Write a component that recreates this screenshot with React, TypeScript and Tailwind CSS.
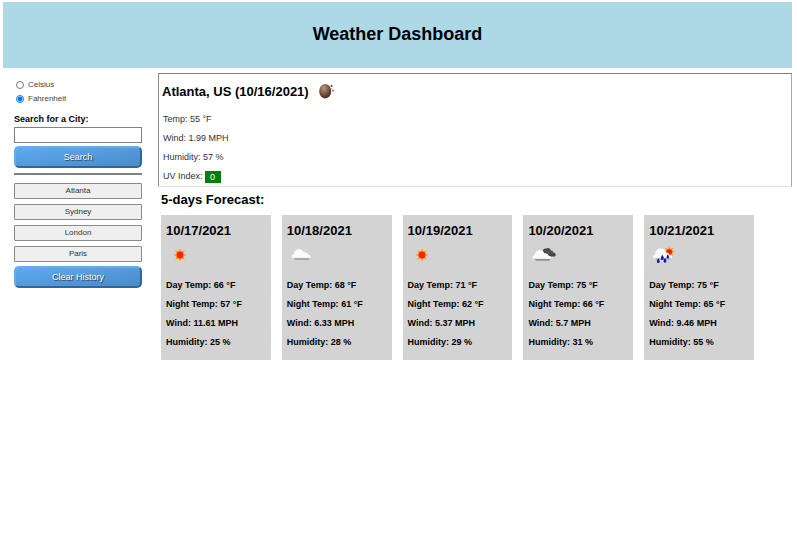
import { useState } from "react";

type Kind = "sun" | "cloud" | "broken" | "rain";

const days: { date: string; icon: Kind; day: number; night: number; wind: string; humidity: number }[] = [
  { date: "10/17/2021", icon: "sun", day: 66, night: 57, wind: "11.61", humidity: 25 },
  { date: "10/18/2021", icon: "cloud", day: 68, night: 61, wind: "6.33", humidity: 28 },
  { date: "10/19/2021", icon: "sun", day: 71, night: 62, wind: "5.37", humidity: 29 },
  { date: "10/20/2021", icon: "broken", day: 75, night: 66, wind: "5.7", humidity: 31 },
  { date: "10/21/2021", icon: "rain", day: 75, night: 65, wind: "9.46", humidity: 55 },
];

const cities = ["Atlanta", "Sydney", "London", "Paris"];

function Sun({ cx, cy, r }: { cx: number; cy: number; r: number }) {
  return (
    <g>
      {[0, 45, 90, 135, 180, 225, 270, 315].map((a) => (
        <path
          key={a}
          d={`M${cx - r * 0.5} ${cy - r * 0.7}L${cx} ${cy - r * 2}L${cx + r * 0.5} ${cy - r * 0.7}Z`}
          fill="#ff9a1c"
          transform={`rotate(${a} ${cx} ${cy})`}
        />
      ))}
      <circle cx={cx} cy={cy} r={r * 1.15} fill="#ffab2e" />
      <circle cx={cx} cy={cy} r={r} fill="#fa2208" />
    </g>
  );
}

function WeatherIcon({ kind }: { kind: Kind }) {
  return (
    <svg width="28" height="28" viewBox="0 0 28 28" aria-hidden="true">
      <defs>
        <linearGradient id={`cloud-${kind}`} x1="0" y1="0" x2="0" y2="1">
          <stop offset="0" stopColor="#ffffff" />
          <stop offset="0.8" stopColor="#fafafa" />
          <stop offset="1" stopColor="#e6e6e6" />
        </linearGradient>
      </defs>
      {kind === "sun" && <Sun cx={14} cy={14} r={3.4} />}
      {kind === "cloud" && (
        <g>
          <path d="M6.5 17H22.8L21.8 18.6H8Z" fill="#777" />
          <path d="M5.6 17.4C3.8 16.8 4.4 13.7 6.7 13.2C7.4 9.6 11.2 7.4 14.2 8.8C15.5 9.4 16.2 10.4 16.8 11.4C19 11 20.6 12.3 21 13.8C23.4 13.8 24.4 16.2 23.2 17.4Z" fill="url(#cloud-cloud)" />
        </g>
      )}
      {kind === "broken" && (
        <g>
          <path d="M14.6 12C14.2 9 16 7 18.4 7.6C20 6.2 22.6 7.4 23 9.4C24.4 9.2 25.4 10.4 25.2 11.6C27.8 11.6 28.6 14.4 26.8 15.6H20Z" fill="#464646" />
          <path d="M17 9.2L22 12.6M21 8.8L25 12.4" stroke="#707070" strokeWidth="0.7" />
          <path d="M6 17.8H22.6L21.6 19.4H8Z" fill="#707070" />
          <path d="M5.4 18.2C3.4 17.2 4.6 14.4 6.6 14C7.2 10.4 10.8 8.2 13.9 9.6C15.2 10.3 16 11.4 16.5 12.4C18.5 12.1 20.2 13.1 20.7 14.7C22.8 14.7 24 17 22.8 18.2Z" fill="url(#cloud-broken)" />
        </g>
      )}
      {kind === "rain" && (
        <g>
          <Sun cx={20.2} cy={10.8} r={2.9} />
          <path d="M5.6 18C3 17 4 13.8 6.1 13.4C6.3 9.6 9 7 12.6 7.6C15.1 7.9 16.3 9.7 16.8 11.5C18.9 11.2 20 12.4 20.4 14C23 13.8 24 17 22.2 18Z" fill="url(#cloud-rain)" />
          <path d="M6.6 18H22" stroke="#888" strokeWidth="0.8" />
          <path d="M9.4 17.2C10.9 19.3 11.3 21.8 9.4 22C7.3 22 7.5 19.5 9.4 17.2ZM13.4 13.8C15 16.1 15.5 18.8 13.4 19C11.1 19 11.7 16.1 13.4 13.8ZM16.1 16.8C17.5 18.9 18 21.6 16.1 21.8C14 21.8 14.3 18.9 16.1 16.8ZM18.9 13.2C20.2 15.2 20.7 17.4 18.9 17.6C17 17.6 17.3 15.2 18.9 13.2Z" fill="#18189c" />
        </g>
      )}
    </svg>
  );
}

function Moon() {
  return (
    <svg width="18" height="18" viewBox="0 0 18 18" className="shrink-0" aria-hidden="true">
      <defs>
        <radialGradient id="moon" cx="0.4" cy="0.3" r="0.75">
          <stop offset="0" stopColor="#b79a88" />
          <stop offset="0.5" stopColor="#80583f" />
          <stop offset="1" stopColor="#382011" />
        </radialGradient>
      </defs>
      <ellipse cx="7.2" cy="8.2" rx="6" ry="7.3" fill="url(#moon)" />
      <circle cx="13.6" cy="2.9" r="1.1" fill="#6d5647" />
      <circle cx="15" cy="7.6" r="1" fill="#85736a" />
      <circle cx="13.4" cy="5.6" r="0.6" fill="#a3958d" />
    </svg>
  );
}

const blueButton =
  "h-[22px] w-full rounded-[5px] border-2 border-t-[#62adf0] border-l-[#62adf0] border-r-[#356594] border-b-[#356594] bg-linear-to-br from-[#5cabf2] to-[#4a8bc8] text-[9px] leading-[16px] text-white [text-shadow:1px_1px_1px_#333]";

export default function App() {
  const [unit, setUnit] = useState("f");
  return (
    <div className="min-h-screen bg-white pt-[2px] pr-[5px] pl-[3px] font-['Liberation_Sans',Arial,sans-serif] text-black">
      <header className="flex h-[66px] items-center justify-center bg-[#add8e6] pb-0.5">
        <h1 className="text-[18px] leading-6 font-bold">Weather Dashboard</h1>
      </header>
      <div className="flex gap-4 pt-[5px] pl-[11px]">
        <aside className="w-32 shrink-0 pt-1">
          <div className="flex flex-col pt-px text-[8px] leading-[14px] text-[#444]">
            <label className="flex items-center gap-1 pl-0.5">
              <input type="radio" name="unit" className="size-2" checked={unit === "c"} onChange={() => setUnit("c")} />
              Celsius
            </label>
            <label className="flex items-center gap-1 pl-0.5">
              <input type="radio" name="unit" className="size-2" checked={unit === "f"} onChange={() => setUnit("f")} />
              Fahrenheit
            </label>
          </div>
          <label htmlFor="city" className="mt-[7px] block text-[9px] leading-[12px] font-bold">
            Search for a City:
          </label>
          <input id="city" type="text" className="mt-0.5 block h-4 w-full border border-[#808080] px-1 text-[8px]" />
          <button type="button" className={`mt-[3px] block ${blueButton}`}>Search</button>
          <hr className="mt-[5px] border-t-2 border-[#808080]" />
          <div className="mt-2 flex flex-col gap-[5px]">
            {cities.map((c) => (
              <button key={c} type="button" className="h-4 rounded-[1px] border border-[#8a8a8a] bg-[#efefef] text-[8px] leading-[14px] text-[#333]">
                {c}
              </button>
            ))}
          </div>
          <button type="button" className={`mt-[4px] block ${blueButton}`}>Clear History</button>
        </aside>
        <main className="min-w-0 flex-1">
          <section className="border border-t-[#808080] border-r-[#a8a8a8] border-b-[#e0e0e0] border-l-[#909090] pt-2 pl-[3px]">
            <h2 className="flex items-center gap-[9px] text-[13px] leading-5 font-bold">
              Atlanta, US (10/16/2021)
              <Moon />
            </h2>
            <div className="mt-2 pl-px text-[9px] leading-[19px] text-[#333]">
              <p>Temp: 55 °F</p>
              <p>Wind: 1.99 MPH</p>
              <p>Humidity: 57 %</p>
              <p className="flex items-center gap-0.5">
                UV Index:
                <span className="w-4 bg-[#008000] text-center leading-[12px] text-white">0</span>
              </p>
            </div>
          </section>
          <section className="pl-[3px]">
            <h2 className="pt-[3px] pb-[5px] text-[13px] leading-5 font-bold">5-days Forecast:</h2>
            <div className="grid w-full max-w-[593px] grid-cols-5 gap-[11px]">
              {days.map((d) => (
                <article key={d.date} className="bg-[#d3d3d3] px-[5px] pt-[6px] pb-2">
                  <h3 className="text-[13px] leading-5 font-bold">{d.date}</h3>
                  <WeatherIcon kind={d.icon} />
                  <div className="mt-[7px] text-[9px] leading-[19px] font-bold">
                    <p>Day Temp: {d.day} °F</p>
                    <p>Night Temp: {d.night} °F</p>
                    <p>Wind: {d.wind} MPH</p>
                    <p>Humidity: {d.humidity} %</p>
                  </div>
                </article>
              ))}
            </div>
          </section>
        </main>
      </div>
    </div>
  );
}
